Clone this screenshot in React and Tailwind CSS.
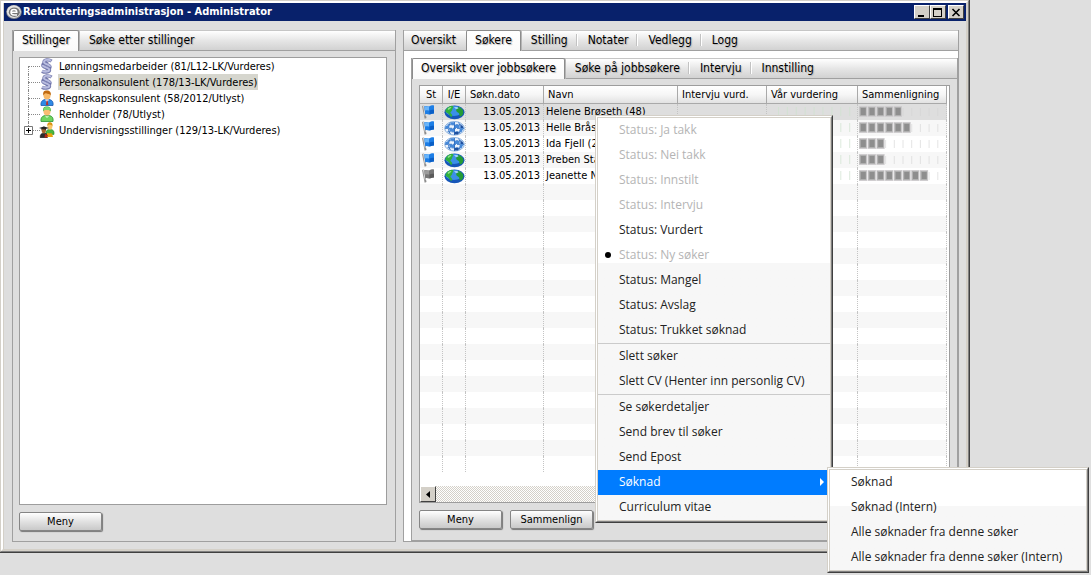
import { useState } from "react";
import clsx from "clsx";

const positions = [
  { name: "Lønningsmedarbeider (81/L12-LK/Vurderes)", icon: "section" },
  { name: "Personalkonsulent (178/13-LK/Vurderes)", icon: "section" },
  { name: "Regnskapskonsulent (58/2012/Utlyst)", icon: "clerk" },
  { name: "Renholder (78/Utlyst)", icon: "nurse" },
  { name: "Undervisningsstillinger (129/13-LK/Vurderes)", icon: "group", expandable: true },
];

const applicants = [
  { date: "13.05.2013", name: "Helene Brøseth (48)", flag: "blue", source: "external", score: 5 },
  { date: "13.05.2013", name: "Helle Bråst", flag: "blue", source: "internal", score: 6 },
  { date: "13.05.2013", name: "Ida Fjell (2", flag: "blue", source: "internal", score: 3 },
  { date: "13.05.2013", name: "Preben Sta", flag: "blue", source: "external", score: 3 },
  { date: "13.05.2013", name: "Jeanette N", flag: "gray", source: "external", score: 8 },
];

const columns = [
  { label: "St", width: "w-[23px]" },
  { label: "I/E", width: "w-[23px]" },
  { label: "Søkn.dato", width: "w-[78px]" },
  { label: "Navn", width: "w-[134px]" },
  { label: "Intervju vurd.", width: "w-[89px]" },
  { label: "Vår vurdering", width: "w-[91px]" },
  { label: "Sammenligning", width: "" },
];

const menuGroups = [
  [
    { label: "Status: Ja takk", disabled: true },
    { label: "Status: Nei takk", disabled: true },
    { label: "Status: Innstilt", disabled: true },
    { label: "Status: Intervju", disabled: true },
    { label: "Status: Vurdert" },
    { label: "Status: Ny søker", disabled: true, current: true },
    { label: "Status: Mangel" },
    { label: "Status: Avslag" },
    { label: "Status: Trukket søknad" },
  ],
  [{ label: "Slett søker" }, { label: "Slett CV (Henter inn personlig CV)" }],
  [
    { label: "Se søkerdetaljer" },
    { label: "Send brev til søker" },
    { label: "Send Epost" },
    {
      label: "Søknad",
      children: ["Søknad", "Søknad (Intern)", "Alle søknader fra denne søker", "Alle søknader fra denne søker (Intern)"],
    },
    { label: "Curriculum vitae" },
  ],
];

const emptyRows = Array.from({ length: 18 }, (_, i) => i);

function Logo() {
  return (
    <svg width="16" height="16" viewBox="0 0 16 16" aria-hidden="true">
      <ellipse cx="8" cy="8" rx="7.800" ry="7" fill="#8d8d8d" />
      <ellipse cx="7.800" cy="7.600" rx="7" ry="6.300" fill="#e4e4e4" />
      <ellipse cx="8.300" cy="8.200" rx="5.500" ry="4.800" fill="#777" />
      <path d="M5 8.200h5.800c0-1.700-1.200-2.600-2.800-2.600s-3 1.100-3 2.700 1.200 2.600 3 2.600h3" fill="none" stroke="#fff" strokeWidth="1.500" />
    </svg>
  );
}

function Flag({ color }) {
  const gray = color === "gray";
  return (
    <svg className="block" width="18" height="16" viewBox="0 0 18 16" aria-hidden="true">
      <path d="M2 2l2-.5 2.500 12.500-1.800.8z" fill="#8e8e8e" />
      <path d="M2.800 2l.8-.2 1.600 10" stroke="#dedede" fill="none" />
      <path d="M4.300 2.300C6 1.200 7.500 3 9.500 2.200S12 1 14 1.500v8c-2-.5-3 .8-4.700 1S7 9.500 5.200 10.500z" fill={gray ? "#777" : "#1d7ee6"} />
      <path d="M4.500 2.500C6 1.500 7 3 9 2.500v4c-1.500.3-2.500-.7-4 .3z" fill={gray ? "#9b9b9b" : "#6ab5fa"} />
      <path d="M9.500 6.500c1.500-.3 2.500-1 4.500-.7v3.700c-2-.5-3 .8-4.500 1z" fill={gray ? "#5a5a5a" : "#0b5fc6"} />
    </svg>
  );
}

function Globe({ source }) {
  return (
    <svg className="mx-auto block" width="21" height="16" viewBox="0 0 21 16" aria-hidden="true">
      {source === "external" ? (
        <>
          <ellipse cx="10.500" cy="8.300" rx="10" ry="6.900" fill="#1656b8" />
          <ellipse cx="10" cy="7" rx="8.500" ry="5" fill="#3b8fe8" />
          <path d="M1.500 6.500C2.500 4 5 2 8 1.800c2 .3 1.500 1.500.8 2.500S8.500 6.500 7.200 7.500 6.500 9 7.500 10s1 2-.3 3C5.500 12 5.500 10.500 4 9.500S1 8 1.500 6.500z" fill="#30b03c" />
          <path d="M3.500 5C4.500 3.500 6 3 7.500 3l-1 1.500L4.500 6z" fill="#8ee08a" />
          <path d="M12 3.500c2-1 4.500-.2 6 1.500 1.500 1.500 1.800 4 .5 6-1 1.200-2.500 1.800-3 .8s.2-2-.8-2.800S12.500 8 12.200 6.500s1.300-1.500-.2-3z" fill="#249c36" />
          <path d="M10 3h3.500l1 1.500-2.500.8z" fill="#9bd0fb" />
        </>
      ) : (
        <>
          <ellipse cx="10.500" cy="8.300" rx="9.800" ry="6.800" fill="#edf4fd" stroke="#6f9fd8" strokeWidth=".8" />
          <g fill="none" stroke="#3372c4" strokeWidth="1">
            <path d="M10.500 2v13M6.500 2.500c-2.500 3-2.500 9 0 11.500M14.500 2.500c2.500 3 2.500 9 0 11.500" />
            <path d="M3.500 4.800h14M1 8.300h19M3.500 11.800h14" strokeDasharray="3 1" />
          </g>
          <g fill="#4588d8">
            <path d="M7 2.200h3.500v2.500H6zM11 5h4.500v3H11zM5 8.500h5v3H6zM1.500 6l3.500-1v3H1.200zM16 8.500h3.500L17.500 12H15.500z" />
          </g>
          <path d="M10.500 12h4.500l-1 2.500h-3.500zM16.500 5l2 .5 1 2.500h-2.500z" fill="#1d4f9e" />
        </>
      )}
    </svg>
  );
}

function Person({ hair, face, coat, shade }) {
  return (
    <>
      <path d="M2 15.500c-.5-4 1.500-5.500 4-6h4c3 .5 4.500 2 4 6z" fill={coat} stroke={shade} strokeWidth=".8" />
      <ellipse cx="8" cy="5.200" rx="3.500" ry="4.300" fill={face} />
      <path d="M4.300 5.500C3.500 1.500 5.500.3 8 .4s4.500 1.400 3.700 5.100C11 3.500 9 4 7 3.200 5.500 3.500 4.800 4.500 4.300 5.500z" fill={hair} />
    </>
  );
}

function TreeIcon({ kind }) {
  return (
    <svg className="shrink-0" width="16" height="16" viewBox="0 0 16 16" aria-hidden="true">
      {kind === "section" && (
        <>
          <path d="M12.500 3.200C10 1.200 5 1.500 5 4.300c0 2.500 6 2.300 6 4.700 0 1.500-2 2-4 1.300" fill="none" stroke="#7479ad" strokeWidth="3.400" />
          <path d="M9 5.800C6 4.800 3.800 5.800 3.800 7.300c0 2.500 6.700 2.200 6.700 4.700 0 2.500-5 2.700-7.500 1.200" fill="none" stroke="#7479ad" strokeWidth="3.400" />
          <path d="M12 2.900C9.500 1.200 5 1.500 5 4c0 2.500 6 2.300 6 4.700M3.600 7c0 2.500 6.700 2.200 6.700 4.700 0 2.200-4.800 2.400-7.100 1.200" fill="none" stroke="#b9bde0" strokeWidth="2" />
        </>
      )}
      {kind === "clerk" && (
        <>
          <Person hair="#c06a10" face="#f8b968" coat="#2f8ae6" shade="#1b5bb0" />
          <path d="M6 9.500h4L8 12.500z" fill="#fff" />
          <path d="M7.500 10.500h1.200l.6 4.500H7z" fill="#b8322a" />
        </>
      )}
      {kind === "nurse" && (
        <>
          <Person hair="#3fb03c" face="#f8bd72" coat="#6fd45f" shade="#2b9132" />
          <path d="M4.500 3C5 .4 11 .4 11.500 3v1h-7z" fill="#7ad873" />
          <path d="M6.500 9.700L8 11.500l1.700-1.800" stroke="#e9ffe5" fill="none" />
        </>
      )}
      {kind === "group" && (
        <>
          <g transform="translate(5.500 0) scale(.68 .8)">
            <Person hair="#d99210" face="#f8c768" coat="#4cb83e" shade="#23862a" />
          </g>
          <g transform="translate(0 4.500) scale(.6 .72)">
            <Person hair="#1d130a" face="#a8692c" coat="#2c2c2c" shade="#111" />
          </g>
          <path d="M0 6l5-1.500L10 6 5 7.500z" fill="#222" />
          <path d="M8 11l5 .5 1 3.500H8z" fill="#e8a30d" />
          <path d="M6 12l3 1-1 2.500H5.500z" fill="#b82716" />
        </>
      )}
    </svg>
  );
}

// Filled blocks for the score, faint ticks for the rest of the scale
function ScoreBar({ score }) {
  return (
    <svg className="block" width="86" height="16" viewBox="0 0 86 16" role="img" aria-label={`${score} av 10`}>
      {Array.from({ length: 10 }, (_, i) => {
        const x = 1 + i * 8.7;
        if (i >= score) {
          return <path key={i} d={`M${x + 0.5} 4v8`} stroke="#d4d4d4" opacity=".6" />;
        }
        return (
          <g key={i}>
            <rect x={x} y="2" width="8.200" height="11" fill="#cfcdcf" />
            <rect x={x + 0.7} y="3" width="6.600" height="9" fill="#b0b0b0" />
            <rect x={x + 1.8} y="4" width="5" height="7" fill="#8e8e8e" />
          </g>
        );
      })}
    </svg>
  );
}

function RatingTicks() {
  return (
    <svg className="block" width="88" height="16" viewBox="0 0 88 16" aria-hidden="true">
      {Array.from({ length: 9 }, (_, i) => (
        <path key={i} d={`M${11.5 + i * 8.9} 3v9`} stroke="#cfe3cf" opacity=".7" />
      ))}
    </svg>
  );
}

function TabBar({ label, tabs, initial = 0 }) {
  const [active, setActive] = useState(initial);
  return (
    <div
      role="tablist"
      aria-label={label}
      className="flex h-[21px] border-t border-[#c6c6c6] border-b border-b-[#a0a0a0] bg-linear-to-b from-white via-[#e6e6e6] via-50% to-[#d2d2d2] text-[12px] leading-4"
    >
      {tabs.map((tab, i) => (
        <button
          key={tab}
          type="button"
          role="tab"
          aria-selected={i === active}
          onClick={() => setActive(i)}
          className={clsx(
            "relative whitespace-nowrap text-shadow-[1px_1px_1px_#b4b4b4]",
            i === active
              ? "-my-px rounded-t-xs border border-b-0 border-[#8c8c8c] bg-linear-to-b from-white to-[#fafafa] px-2 pb-[2px] shadow-[1px_0_0_#b5b5b5]"
              : "px-[10px] pb-[2px] first:pl-[7px]"
          )}
        >
          {tab}
          {i !== active && i !== active - 1 && i < tabs.length - 1 && (
            <span className="absolute top-[3px] right-0 h-3 w-[2px] border-r border-white bg-[#c2c2c2]" />
          )}
        </button>
      ))}
    </div>
  );
}

function PushButton({ children }) {
  return (
    <button
      type="button"
      className="h-[19px] w-[83px] rounded-xs border border-[#858585] bg-linear-to-b from-white via-[#e2e2e2] via-50% to-[#c9c9c9] text-center leading-4 shadow-[1px_1px_1px_#777]"
    >
      {children}
    </button>
  );
}

function PositionTree() {
  const [selected, setSelected] = useState(1);
  return (
    <ul className="min-h-0 flex-1 border border-[#9d9d9d] bg-white">
      {positions.map((p, i) => (
        <li key={p.name} className="relative flex h-4 items-center pl-[19px]">
          <span className={clsx("absolute top-0 left-2 border-l border-dotted border-[#888]", i === positions.length - 1 ? "h-2" : "h-4", i === 0 && "mt-2 h-2")} />
          <span className="absolute top-2 left-2 w-3 border-t border-dotted border-[#888]" />
          {p.expandable && (
            <button type="button" aria-label="Utvid" className="absolute top-1 left-1 bg-white">
              <svg width="9" height="9" viewBox="0 0 9 9" className="block">
                <path d="M.5.5h8v8h-8z" fill="#fff" stroke="#777" />
                <path d="M2 4.500h5M4.500 2v5" stroke="#000" />
              </svg>
            </button>
          )}
          <TreeIcon kind={p.icon} />
          <button
            type="button"
            onClick={() => setSelected(i)}
            className={clsx("ml-[3px] h-4 px-px leading-[18px] whitespace-nowrap", i === selected && "bg-[#d6d6ce]")}
          >
            {p.name}
          </button>
        </li>
      ))}
    </ul>
  );
}

function ApplicantTable() {
  const cell = "border-r border-dotted border-r-[#c4c4c4] p-0";
  return (
    <div className="flex min-h-0 flex-1 flex-col border border-[#9d9d9d] bg-white">
      <table className="w-full table-fixed border-separate border-spacing-0 pr-[2px]">
        <thead>
          <tr>
            {columns.map((c, i) => (
              <th
                key={c.label}
                className={clsx(
                  "h-[18px] overflow-hidden border-r border-b border-[#a9a9a9] bg-linear-to-b from-white via-[#f6f6f6] to-[#e2e2e2] p-0 pt-px leading-4 font-normal whitespace-nowrap",
                  c.width,
                  i < 2 ? "text-center" : "pl-1 text-left"
                )}
              >
                {c.label}
              </th>
            ))}
          </tr>
        </thead>
        <tbody>
          {applicants.map((a, i) => (
            <tr key={a.name} className={clsx("h-4", i === 0 ? "bg-[#dedede]" : i % 2 ? "bg-[#f7f7f7]" : "bg-white")}>
              <td className={cell}><Flag color={a.flag} /></td>
              <td className={cell}><Globe source={a.source} /></td>
              <td className={clsx(cell, "pr-[3px] text-right leading-4")}>{a.date}</td>
              <td className={clsx(cell, "overflow-hidden pl-[2px] leading-4 whitespace-nowrap")}>{a.name}</td>
              <td className={cell} />
              <td className={cell}><RatingTicks /></td>
              <td className={cell}><ScoreBar score={a.score} /></td>
            </tr>
          ))}
          {emptyRows.map((r) => (
            <tr key={r} className={clsx("h-4", r % 2 ? "bg-white" : "bg-[#f7f7f7]")}>
              {columns.map((c) => (
                <td key={c.label} className={cell} />
              ))}
            </tr>
          ))}
        </tbody>
      </table>
      <div className="mt-auto flex h-4 bg-[conic-gradient(#fff_25%,#d4d0c8_0_50%,#fff_0_75%,#d4d0c8_0)] bg-[length:2px_2px]">
        <button
          type="button"
          aria-label="Rull til venstre"
          className="flex w-4 items-center justify-center border border-t-white border-r-[#404040] border-b-[#404040] border-l-white bg-[#d4d0c8]"
        >
          <svg width="4" height="7" viewBox="0 0 4 7">
            <path d="M4 0v7L0 3.500z" />
          </svg>
        </button>
      </div>
    </div>
  );
}

function MenuPanel({ className, children }) {
  return (
    <div
      role="menu"
      className={clsx("absolute border border-[#d4d0c8] border-r-[#404040] border-b-[#404040] font-['Open_Sans',sans-serif] text-[12px] text-[#222]", className)}
    >
      <div className="border border-white border-r-[#808080] border-b-[#808080]">
        <div className="border border-[#d4d0c8] bg-linear-to-b from-white from-36% to-[#f7f7f7] to-36%">{children}</div>
      </div>
    </div>
  );
}

function MenuItem({ item }) {
  return (
    <div className="relative">
      <button
        type="button"
        role="menuitem"
        disabled={item.disabled}
        className={clsx(
          "flex h-[25px] w-full items-center pb-[2px] pl-[21px] whitespace-nowrap",
          item.disabled && "text-[#b4b4b4]",
          item.children && "bg-[#007cff] text-white"
        )}
      >
        {item.current && <span className="absolute left-[7px] size-[6px] rounded-full bg-black" />}
        {item.label}
        {item.children && (
          <svg className="mr-[6px] ml-auto" width="4" height="8" viewBox="0 0 4 8">
            <path d="M0 0v8l4-4z" fill="#fff" />
          </svg>
        )}
      </button>
      {item.children && (
        <MenuPanel className="-top-[3px] left-[229px] w-[262px]">
          {item.children.map((label) => (
            <MenuItem key={label} item={{ label }} />
          ))}
        </MenuPanel>
      )}
    </div>
  );
}

function ContextMenu() {
  return (
    <MenuPanel className="top-[115px] left-[595px] w-[238px]">
      {menuGroups.map((group, i) => (
        <div key={group[0].label} className={clsx(i > 0 && "border-t border-[#cbcbcb]")}>
          {group.map((item) => (
            <MenuItem key={item.label} item={item} />
          ))}
        </div>
      ))}
    </MenuPanel>
  );
}

function TitleBar() {
  const button = "flex h-[14px] w-4 items-center justify-center border border-t-white border-r-[#404040] border-b-[#404040] border-l-white bg-[#d4d0c8]";
  return (
    <header className="flex h-[18px] items-center bg-[#08216b] px-[2px] text-white">
      <Logo />
      <h1 className="ml-px flex-1 pt-px font-bold whitespace-nowrap">Rekrutteringsadministrasjon - Administrator</h1>
      <button type="button" aria-label="Minimer" className={button}>
        <svg width="10" height="9" viewBox="0 0 10 9"><path d="M1 7h6v2H1z" /></svg>
      </button>
      <button type="button" aria-label="Maksimer" className={button}>
        <svg width="10" height="9" viewBox="0 0 10 9"><path d="M0 0h9v9H0zM1 2v6h7V2z" fillRule="evenodd" /></svg>
      </button>
      <button type="button" aria-label="Lukk" className={clsx(button, "ml-[2px]")}>
        <svg width="10" height="9" viewBox="0 0 10 9"><path d="M1.500 1l7 7M8.500 1l-7 7" stroke="#000" strokeWidth="1.600" /></svg>
      </button>
    </header>
  );
}

export default function App() {
  return (
    <div className="relative flex min-h-screen flex-col overflow-hidden bg-[#dfdfdf] pr-[121px] pb-[22px] font-['DejaVu_Sans_Condensed','DejaVu_Sans',sans-serif] text-[11px] text-black">
      <div className="flex flex-1 flex-col border-r border-b border-[#404040] bg-[#dedede]">
        <div className="flex flex-1 flex-col border-t border-r border-b border-l border-[#808080] border-t-[#d4d0c8] border-l-[#d4d0c8]">
          <div className="flex flex-1 flex-col border-t-2 border-r-2 border-b-2 border-l-2 border-t-white border-r-[#d4d0c8] border-b-[#d4d0c8] border-l-white">
            <div className="flex flex-1 flex-col border-l border-[#d4d0c8]">
              <TitleBar />
              <main className="grid flex-1 grid-cols-[384fr_556fr] gap-[7px] pt-[9px] pr-[7px] pb-[7px] pl-2">
                <section className="flex flex-col border-x border-b border-[#a0a0a0]">
                  <TabBar label="Stillinger" tabs={["Stillinger", "Søke etter stillinger"]} />
                  <div className="flex flex-1 flex-col pt-[6px] pr-2 pb-[10px] pl-[6px]">
                    <PositionTree />
                    <div className="mt-[7px] flex">
                      <PushButton>Meny</PushButton>
                    </div>
                  </div>
                </section>
                <section className="flex flex-col border-x border-b border-[#a0a0a0] bg-white">
                  <TabBar label="Stilling" tabs={["Oversikt", "Søkere", "Stilling", "Notater", "Vedlegg", "Logg"]} initial={1} />
                  <div className="mt-[7px] ml-[7px] flex flex-1 flex-col border-x border-b border-[#a0a0a0] bg-[#dedede]">
                    <TabBar label="Søkere" tabs={["Oversikt over jobbsøkere", "Søke på jobbsøkere", "Intervju", "Innstilling"]} />
                    <div className="flex flex-1 flex-col px-[7px] pt-[6px] pb-[11px]">
                      <ApplicantTable />
                      <div className="mt-[7px] flex gap-2">
                        <PushButton>Meny</PushButton>
                        <PushButton>Sammenlign</PushButton>
                      </div>
                    </div>
                  </div>
                </section>
              </main>
            </div>
          </div>
        </div>
      </div>
      <ContextMenu />
    </div>
  );
}
